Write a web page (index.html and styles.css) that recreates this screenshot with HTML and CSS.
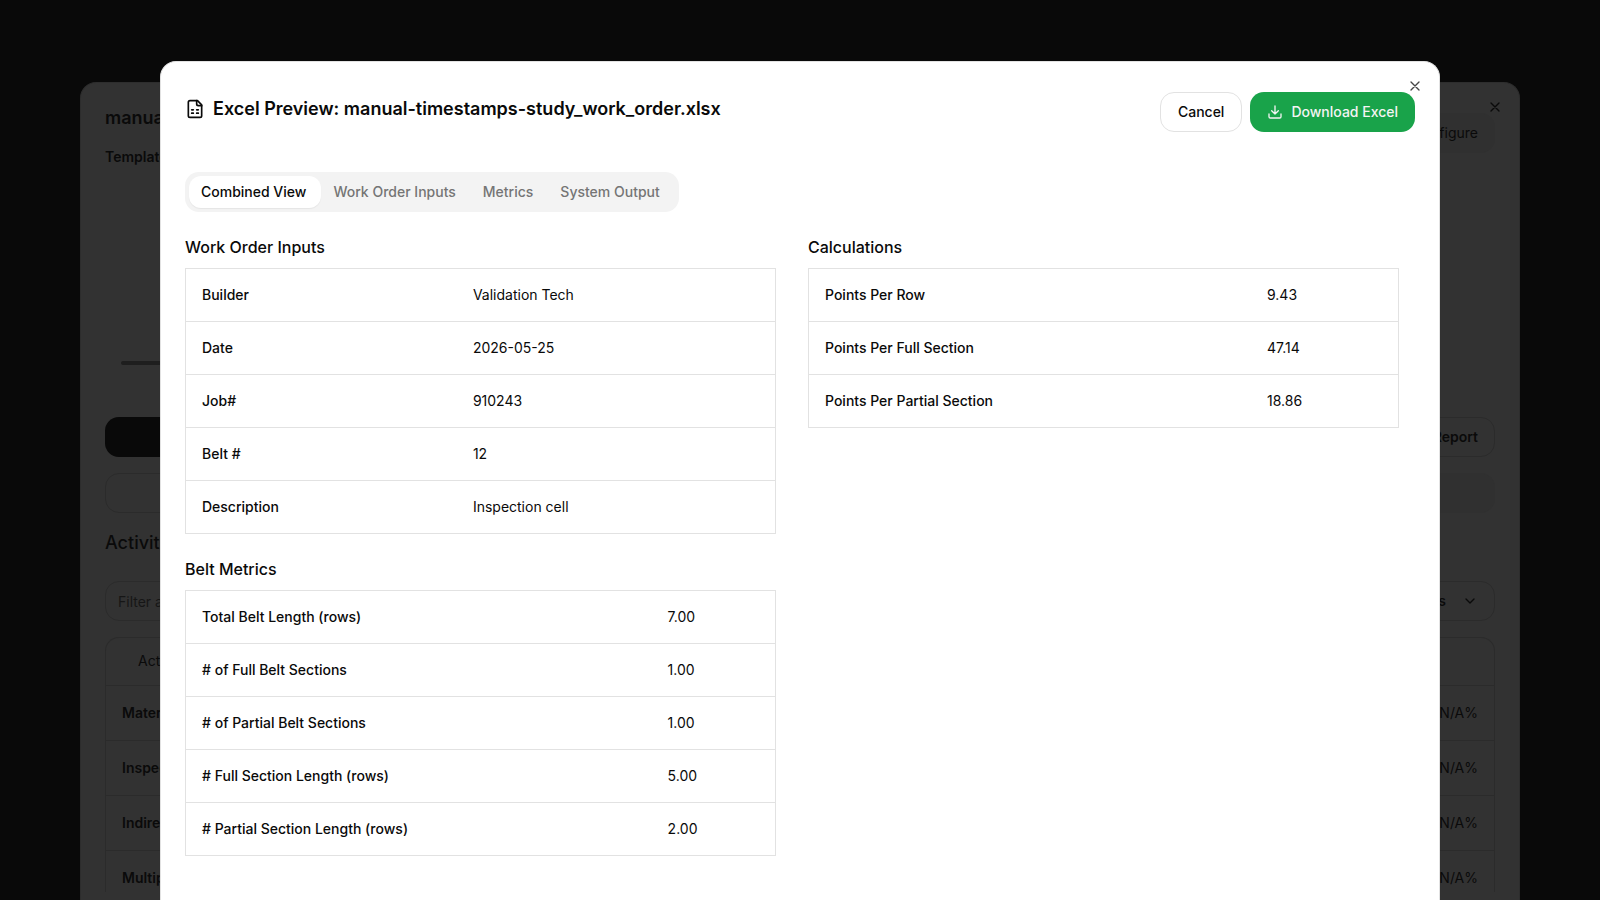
FILE: index.html
```html
<!DOCTYPE html>
<html lang="en">
<head>
  <meta charset="UTF-8">
  <title>Excel Preview</title>
  <meta name="viewport" content="width=device-width, initial-scale=1.0">
  <link rel="stylesheet" href="styles.css">
</head>
<body>

<!-- study dialog, dimmed while the preview is open -->
<section class="study">
  <button class="close" aria-label="Close study">
    <svg class="icon" viewBox="0 0 24 24"><path d="M18 6 6 18M6 6l12 12"/></svg>
  </button>
  <div class="study-head">
    <div>
      <h2>manual</h2>
      <p class="template">Template:</p>
    </div>
    <button class="study-btn muted">Configure</button>
  </div>
  <div class="timeline"><div class="timeline-bar"></div></div>
  <div class="study-row">
    <button class="study-btn solid" aria-label="Start"></button>
    <button class="study-btn">Report</button>
  </div>
  <div class="study-row">
    <button class="study-btn wide" aria-label="Previous"></button>
    <button class="study-btn muted wide" aria-label="Next"></button>
  </div>
  <h3>Activity</h3>
  <div class="study-row filters">
    <input type="text" placeholder="Filter activities..." aria-label="Filter activities">
    <div class="select-wrap">
      <select aria-label="Columns"><option>Columns</option></select>
      <svg class="icon" viewBox="0 0 24 24"><path d="m6 9 6 6 6-6"/></svg>
    </div>
  </div>
  <div class="activity-box">
    <table class="activity">
      <thead><tr><th>Activity</th><th></th></tr></thead>
      <tbody>
        <tr><td>Material</td><td>N/A%</td></tr>
        <tr><td>Inspection</td><td>N/A%</td></tr>
        <tr><td>Indirect</td><td>N/A%</td></tr>
        <tr><td>Multiple</td><td>N/A%</td></tr>
      </tbody>
    </table>
  </div>
</section>

<main class="preview" role="dialog" aria-labelledby="preview-title">
  <button class="close" aria-label="Close">
    <svg class="icon" viewBox="0 0 24 24"><path d="M18 6 6 18M6 6l12 12"/></svg>
  </button>

  <header class="preview-head">
    <h1 id="preview-title">
      <svg class="icon icon-lg" viewBox="0 0 24 24"><path d="M15 2H6a2 2 0 0 0-2 2v16a2 2 0 0 0 2 2h12a2 2 0 0 0 2-2V7Z"/><path d="M14 2v4a2 2 0 0 0 2 2h4M8 13h2M14 13h2M8 17h2M14 17h2"/></svg>
      <span>Excel Preview: manual-timestamps-study_work_order.xlsx</span>
    </h1>
    <div class="actions">
      <button class="btn">Cancel</button>
      <button class="btn btn-green">
        <svg class="icon" viewBox="0 0 24 24"><path d="M21 15v4a2 2 0 0 1-2 2H5a2 2 0 0 1-2-2v-4M7 10l5 5 5-5M12 15V3"/></svg>
        Download Excel
      </button>
    </div>
  </header>

  <div class="tabs" role="tablist">
    <button class="tab active" role="tab" aria-selected="true">Combined View</button>
    <button class="tab" role="tab">Work Order Inputs</button>
    <button class="tab" role="tab">Metrics</button>
    <button class="tab" role="tab">System Output</button>
  </div>

  <div class="columns">
    <div class="column">
      <section>
        <h2>Work Order Inputs</h2>
        <table class="sheet inputs">
          <tr><th scope="row">Builder</th><td>Validation Tech</td></tr>
          <tr><th scope="row">Date</th><td>2026-05-25</td></tr>
          <tr><th scope="row">Job#</th><td>910243</td></tr>
          <tr><th scope="row">Belt #</th><td>12</td></tr>
          <tr><th scope="row">Description</th><td>Inspection cell</td></tr>
        </table>
      </section>
      <section>
        <h2>Belt Metrics</h2>
        <table class="sheet metrics">
          <tr><th scope="row">Total Belt Length (rows)</th><td>7.00</td></tr>
          <tr><th scope="row"># of Full Belt Sections</th><td>1.00</td></tr>
          <tr><th scope="row"># of Partial Belt Sections</th><td>1.00</td></tr>
          <tr><th scope="row"># Full Section Length (rows)</th><td>5.00</td></tr>
          <tr><th scope="row"># Partial Section Length (rows)</th><td>2.00</td></tr>
        </table>
      </section>
    </div>
    <div class="column">
      <section>
        <h2>Calculations</h2>
        <table class="sheet calculations">
          <tr><th scope="row">Points Per Row</th><td>9.43</td></tr>
          <tr><th scope="row">Points Per Full Section</th><td>47.14</td></tr>
          <tr><th scope="row">Points Per Partial Section</th><td>18.86</td></tr>
        </table>
      </section>
    </div>
  </div>
</main>

</body>
</html>
```
FILE: styles.css
```css
* {
  box-sizing: border-box;
}
body {
  margin: 0;
  height: 100vh;
  overflow: hidden;
  background: #090909;
  color: #0a0a0a;
  font-family: Inter, "Liberation Sans", sans-serif;
  font-size: 14px;
  line-height: 20px;
}
h1, h2, h3, p {
  margin: 0;
}
button, input, select {
  font: inherit;
  color: inherit;
}
button {
  cursor: pointer;
}
.icon {
  width: 16px;
  height: 16px;
  flex: none;
  fill: none;
  stroke: currentColor;
  stroke-width: 2;
  stroke-linecap: round;
  stroke-linejoin: round;
}
.icon-lg {
  width: 20px;
  height: 20px;
}
.close {
  position: absolute;
  top: 16px;
  right: 16px;
  display: flex;
  padding: 0;
  border: none;
  background: none;
  color: #454545;
}

/* dimmed dialog */
.study {
  position: fixed;
  top: 82px;
  bottom: 0;
  left: 5%;
  right: 5%;
  display: flex;
  flex-direction: column;
  padding: 24px 24px 8px;
  border: 1px solid #2d2d2d;
  border-bottom: none;
  border-radius: 16px 16px 0 0;
  background: #323232;
}
.study .close {
  color: #0a0a0a;
}
.study-head {
  display: flex;
  justify-content: space-between;
  align-items: flex-start;
  height: 84px;
}
.study-head h2 {
  font-size: 18px;
  line-height: 22px;
  font-weight: 600;
}
.template {
  margin-top: 18px;
  font-weight: 600;
}
.study-head .study-btn {
  margin-top: 6px;
  font-weight: 400;
}
.study-btn {
  height: 40px;
  padding: 0 16px;
  border: 1px solid #2b2b2b;
  border-radius: 14px;
  background: none;
  font-weight: 600;
}
.study-btn.muted {
  border-color: #303030;
  background: #303030;
}
.study-btn.solid {
  flex: 1;
  border: none;
  background: #090909;
}
.study-btn.wide {
  flex: 1;
}
.timeline {
  flex: none;
  height: 226px;
  padding: 170px 16px 0;
}
.timeline-bar {
  width: 50%;
  height: 4px;
  border-radius: 2px;
  background: #1e1e1e;
}
.study-row {
  display: flex;
  flex: none;
  gap: 16px;
  margin-bottom: 16px;
}
.study h3 {
  margin-bottom: 24px;
  font-size: 18px;
  line-height: 28px;
  font-weight: 500;
}
.filters {
  justify-content: space-between;
}
.filters input {
  width: 384px;
  height: 40px;
  padding: 0 12px;
  border: 1px solid #2b2b2b;
  border-radius: 14px;
  background: none;
}
.filters input::placeholder {
  color: #161616;
}
.select-wrap {
  position: relative;
}
.select-wrap select {
  height: 40px;
  padding: 0 48px 0 16px;
  border: 1px solid #2b2b2b;
  border-radius: 14px;
  background: none;
  font-weight: 600;
  appearance: none;
}
.select-wrap .icon {
  position: absolute;
  top: 12px;
  right: 17px;
  pointer-events: none;
}
.activity-box {
  flex: 1;
  min-height: 0;
  overflow: hidden;
  border: 1px solid #2b2b2b;
  border-bottom: none;
  border-radius: 14px 14px 0 0;
}
.activity {
  width: 100%;
  border-collapse: collapse;
}
.activity th {
  height: 47px;
  padding: 0 32px;
  font-weight: 400;
  text-align: left;
}
.activity td {
  height: 55px;
  padding: 0 16px;
  border-top: 1px solid #2b2b2b;
  font-weight: 600;
}
.activity td:last-child {
  font-weight: 400;
  text-align: right;
}

/* preview dialog */
.preview {
  position: fixed;
  top: 61px;
  bottom: 0;
  left: 10%;
  right: 10%;
  padding: 30px 24px 0;
  border: 1px solid #e2e2e2;
  border-bottom: none;
  border-radius: 16px 16px 0 0;
  background: #fff;
}
.preview-head {
  display: flex;
  justify-content: space-between;
  align-items: flex-start;
  margin-bottom: 40px;
}
.preview-head h1 {
  display: flex;
  align-items: center;
  gap: 8px;
  font-size: 18px;
  line-height: 34px;
  font-weight: 600;
}
.actions {
  display: flex;
  gap: 8px;
}
.btn {
  display: flex;
  align-items: center;
  gap: 8px;
  height: 40px;
  padding: 0 17px;
  border: 1px solid #e2e2e2;
  border-radius: 14px;
  background: #fff;
  font-weight: 500;
}
.btn-green {
  border: none;
  background: #19a34a;
  color: #f4f4f4;
}
.tabs {
  display: inline-flex;
  height: 40px;
  padding: 4px;
  border-radius: 14px;
  background: #f3f3f3;
}
.tab {
  padding: 0 15px 0 12px;
  border: none;
  border-radius: 12px;
  background: none;
  color: #757575;
  font-weight: 500;
}
.tab.active {
  background: #fff;
  color: #0a0a0a;
  box-shadow: 0 1px 1px rgba(0, 0, 0, 0.06);
}
.columns {
  display: grid;
  grid-template-columns: 1fr 1fr;
  gap: 32px;
  margin-top: 24px;
  padding-right: 16px;
}
.column {
  display: flex;
  flex-direction: column;
  gap: 24px;
}
.column h2 {
  margin-bottom: 10px;
  font-size: 16px;
  line-height: 22px;
  font-weight: 500;
}
.sheet {
  width: 100%;
  border: 1px solid #e2e2e2;
  border-collapse: collapse;
  table-layout: fixed;
}
.sheet tr {
  border-bottom: 1px solid #e2e2e2;
}
.sheet th, .sheet td {
  padding: 16px;
  text-align: left;
}
.sheet th {
  font-weight: 500;
}
.inputs th {
  width: 46%;
}
.metrics th {
  width: 79%;
}
.calculations th {
  width: 75%;
}
```
